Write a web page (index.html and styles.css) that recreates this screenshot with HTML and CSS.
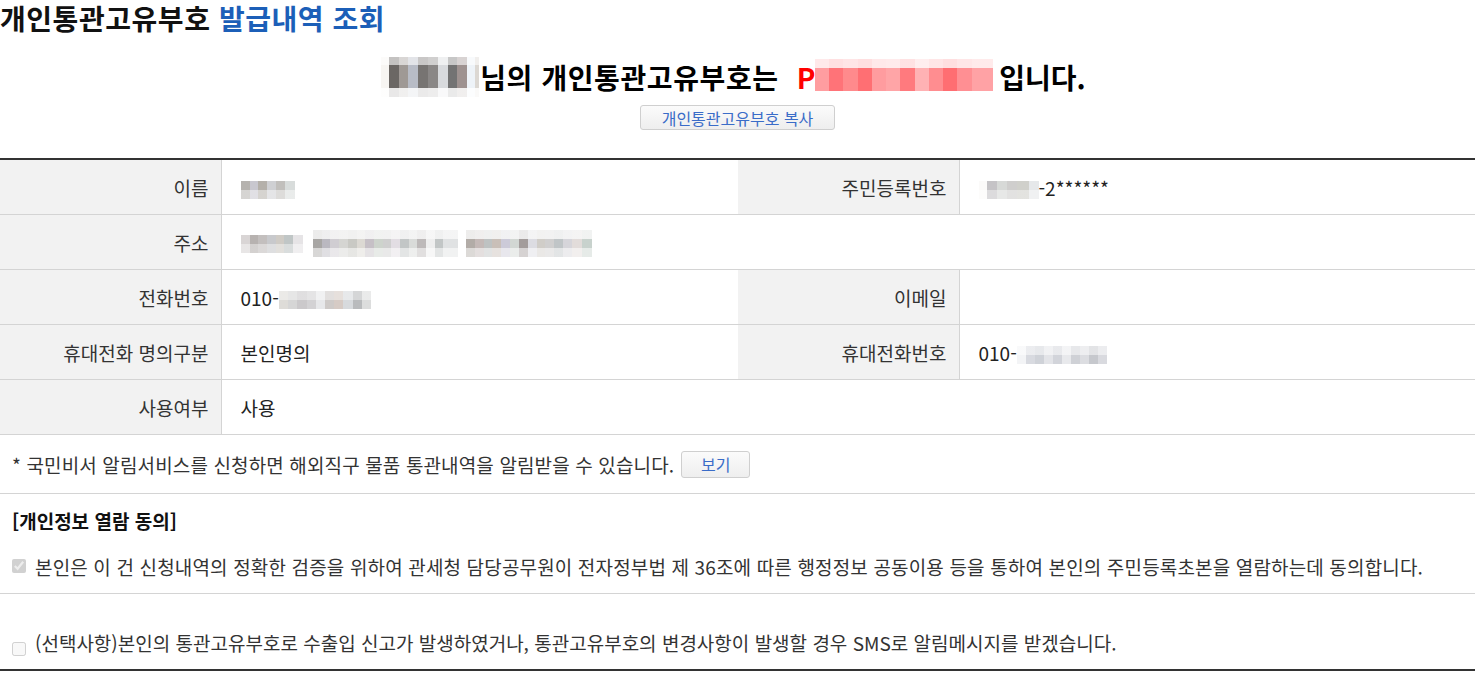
FILE: index.html
```html
<!DOCTYPE html>
<html lang="ko">
<head>
<meta charset="utf-8">
<title>개인통관고유부호 발급내역 조회</title>
<link rel="stylesheet" href="styles.css">
</head>
<body>
<h1 class="page-title">개인통관고유부호 <span class="accent">발급내역 조회</span></h1>

<section class="result">
  <p class="result-line"><span class="mosaic mosaic-name"></span><span class="who">님의 개인통관고유부호는</span><span class="code"><span class="code-p">P</span><span class="mosaic mosaic-code"></span></span><span class="tail">입니다.</span></p>
  <button class="btn btn-copy" type="button">개인통관고유부호 복사</button>
</section>

<table class="info">
  <colgroup>
    <col class="c-th1"><col class="c-td1"><col class="c-th2"><col>
  </colgroup>
  <tr>
    <th>이름</th>
    <td><span class="mosaic mosaic-s1"></span></td>
    <th>주민등록번호</th>
    <td><span class="mosaic mosaic-s2"></span>-2******</td>
  </tr>
  <tr>
    <th>주소</th>
    <td colspan="3"><span class="mosaic mosaic-a1"></span><span class="mosaic mosaic-a2"></span><span class="mosaic mosaic-a3"></span></td>
  </tr>
  <tr>
    <th>전화번호</th>
    <td>010-<span class="mosaic mosaic-p"></span></td>
    <th>이메일</th>
    <td></td>
  </tr>
  <tr>
    <th>휴대전화 명의구분</th>
    <td>본인명의</td>
    <th>휴대전화번호</th>
    <td>010-<span class="mosaic mosaic-p2"></span></td>
  </tr>
  <tr>
    <th>사용여부</th>
    <td colspan="3">사용</td>
  </tr>
</table>

<div class="notice">
  <span>* 국민비서 알림서비스를 신청하면 해외직구 물품 통관내역을 알림받을 수 있습니다.</span>
  <button class="btn btn-view" type="button">보기</button>
</div>

<section class="agree">
  <h2 class="agree-title">[개인정보 열람 동의]</h2>
  <label class="check-row"><input type="checkbox" checked disabled><span>본인은 이 건 신청내역의 정확한 검증을 위하여 관세청 담당공무원이 전자정부법 제 36조에 따른 행정정보 공동이용 등을 통하여 본인의 주민등록초본을 열람하는데 동의합니다.</span></label>
  <label class="check-row check-row-2"><input type="checkbox" disabled><span>(선택사항)본인의 통관고유부호로 수출입 신고가 발생하였거나, 통관고유부호의 변경사항이 발생할 경우 SMS로 알림메시지를 받겠습니다.</span></label>
</section>
</body>
</html>
```

FILE: styles.css
```css
html, body {
  margin: 0;
  padding: 0;
  background: #fff;
}
body {
  font-family: "Noto Sans CJK KR", "Noto Sans", "Liberation Sans", sans-serif;
  color: #333;
  width: 1475px;
}
.page-title {
  margin: 0;
  height: 38px;
  font-size: 28px;
  line-height: 36px;
  font-weight: 700;
  color: #111;
  letter-spacing: 0.55px;
}
.page-title .accent {
  color: #1c5fb8;
}
.result {
  display: flex;
  flex-direction: column;
  align-items: center;
  height: 120px;
}
.result-line {
  margin: 18px 0 0;
  height: 42px;
  font-size: 28px;
  line-height: 42px;
  font-weight: 700;
  color: #000;
  display: flex;
  align-items: center;
  letter-spacing: 0.6px;
  white-space: nowrap;
  padding-right: 8px;
}
.who {
  margin-left: 1px;
}
.tail {
  margin-left: 6px;
  letter-spacing: 0;
}
.mosaic {
  display: inline-block;
  vertical-align: middle;
  flex: none;
}
.mosaic-name {
  width: 98px;
  height: 40px;
  background:
    linear-gradient(180deg, rgba(255,255,255,0.6) 0 20%, rgba(255,255,255,0) 20% 78%, rgba(255,255,255,0.85) 78% 100%),
    linear-gradient(90deg, #f7f5f2 0 8%, #6b6764 8% 18%, #9f9995 18% 28%, #b8bcc6 28% 38%, #777472 38% 48%, #8a8786 48% 58%, #d8dadd 58% 68%, #737373 68% 78%, #9e9290 78% 88%, #eef3f8 88% 96%, #dcd8d3 96% 100%);
}
.code {
  display: inline-flex;
  align-items: center;
  margin-left: 18px;
}
.code-p {
  color: #f00;
  letter-spacing: 0;
}
.mosaic-code {
  width: 178px;
  height: 32px;
  margin-top: -4px;
  background:
    linear-gradient(180deg, rgba(255,255,255,0.78) 0 28%, rgba(255,255,255,0) 28% 100%),
    linear-gradient(90deg, #ff9da0 0 8%, #ff7378 8% 16%, #ff8a8c 16% 24%, #ff6f73 24% 32%, #ff9c9f 32% 40%, #ffa5a7 40% 48%, #ff7a7e 48% 56%, #ffb2b4 56% 64%, #ff8d90 64% 72%, #ff6e72 72% 80%, #ff8f93 80% 88%, #ffa2a5 88% 100%);
}
.btn {
  font-family: "Noto Sans CJK KR", "Noto Sans", sans-serif;
  background: linear-gradient(#fbfbfb, #eeeeee);
  border: 1px solid #cfcfcf;
  border-radius: 3px;
  color: #3a6cc8;
  cursor: pointer;
  padding: 0;
}
.btn-copy {
  margin-top: 7px;
  width: 195px;
  height: 25px;
  font-size: 16px;
  line-height: 22px;
}
.info {
  width: 1475px;
  border-collapse: collapse;
  border-top: 2px solid #333;
  font-size: 19px;
  table-layout: fixed;
}
.c-th1 { width: 221px; }
.c-td1 { width: 517px; }
.c-th2 { width: 221px; }
.info th,
.info td {
  height: 54px;
  border-bottom: 1px solid #d4d4d4;
  padding: 0;
  font-weight: 400;
  color: #333;
}
.info th {
  background: #f2f2f2;
  text-align: right;
  padding-right: 12px;
  border-right: 1px solid #d4d4d4;
}
.info td {
  text-align: left;
  padding-left: 19px;
  color: #222;
}
.mosaic-s1 {
  width: 54px;
  height: 18px;
  background:
    linear-gradient(180deg, rgba(255,255,255,0) 0 50%, rgba(255,255,255,0.45) 50% 100%),
    linear-gradient(90deg, #b5b2ae 0 16%, #c8c7cf 16% 32%, #b4b0aa 32% 48%, #cfd0d3 48% 64%, #c1bfbc 64% 82%, #d8dcdb 82% 100%);
}
.mosaic-s2 {
  width: 60px;
  height: 18px;
  background:
    linear-gradient(180deg, rgba(255,255,255,0) 0 50%, rgba(255,255,255,0.4) 50% 100%),
    linear-gradient(90deg, #fbfaf9 0 14%, #c5c3c6 14% 30%, #d7d9d7 30% 46%, #cfcecd 46% 64%, #d0d0cb 64% 84%, #e6e8ea 84% 100%);
}
.mosaic-a1 {
  width: 62px;
  height: 18px;
  margin-right: 10px;
  background:
    linear-gradient(180deg, rgba(255,255,255,0) 0 50%, rgba(255,255,255,0.4) 50% 100%),
    linear-gradient(90deg, #d9d5d5 0 14%, #b7b2b0 14% 28%, #c3bfbe 28% 42%, #c8c9cc 42% 56%, #cfcbc5 56% 70%, #c0c6c6 70% 84%, #e6e4e6 84% 100%);
}
.mosaic-a2 {
  width: 145px;
  height: 27px;
  margin-right: 8px;
  background:
    linear-gradient(180deg, rgba(248,248,248,0.85) 0 33%, rgba(255,255,255,0) 33% 66%, rgba(255,255,255,0.55) 66% 100%),
    linear-gradient(90deg, #a8a6a4 0 6%, #bab8c0 6% 12%, #d0cdd2 12% 18%, #d5d5d2 18% 24%, #c9c9c4 24% 30%, #dcd9d3 30% 36%, #c6c0c6 36% 42%, #cdd3cc 42% 48%, #cfcfcf 48% 54%, #e2dde3 54% 60%, #c2c6c6 60% 66%, #d9dbd9 66% 72%, #bdb9b9 72% 78%, #eeeeee 78% 84%, #c2c6c6 84% 90%, #e0e2e3 90% 100%);
}
.mosaic-a3 {
  width: 126px;
  height: 27px;
  background:
    linear-gradient(180deg, rgba(248,248,248,0.85) 0 33%, rgba(255,255,255,0) 33% 66%, rgba(255,255,255,0.55) 66% 100%),
    linear-gradient(90deg, #b2aca7 0 7%, #c4b9b7 7% 14%, #bec2c2 14% 21%, #c9bfb8 21% 28%, #cccad8 28% 35%, #d2d7d3 35% 42%, #a39c9b 42% 49%, #dcdce2 49% 56%, #d0cdc8 56% 63%, #d0cfcf 63% 70%, #c0c5c7 70% 77%, #d6d5da 77% 84%, #e2dcda 84% 92%, #c8d2cd 92% 100%);
}
.mosaic-p {
  width: 92px;
  height: 18px;
  background:
    linear-gradient(180deg, rgba(255,255,255,0.4) 0 50%, rgba(255,255,255,0) 50% 100%),
    linear-gradient(90deg, #dedcd8 0 10%, #d6d6d6 10% 20%, #cbc9cb 20% 30%, #d3d2d4 30% 40%, #e7e8ea 40% 50%, #cecac8 50% 60%, #d6cbc5 60% 70%, #d7dadd 70% 80%, #b9bbbd 80% 90%, #dcdddd 90% 100%);
}
.mosaic-p2 {
  width: 90px;
  height: 18px;
  background:
    linear-gradient(180deg, rgba(255,255,255,0.5) 0 50%, rgba(255,255,255,0) 50% 100%),
    linear-gradient(90deg, #f3f4f6 0 10%, #d8dae0 10% 20%, #cfd2d8 20% 30%, #e3e4e8 30% 40%, #d2d4da 40% 50%, #e8e9ec 50% 60%, #cfd1d6 60% 70%, #dcdde1 70% 80%, #c6c8cd 80% 90%, #d9dadf 90% 100%);
}
.notice {
  display: flex;
  align-items: center;
  gap: 7px;
  height: 58px;
  padding-left: 12px;
  font-size: 19px;
  letter-spacing: 0.13px;
  color: #333;
  border-bottom: 1px solid #d4d4d4;
}
.btn-view {
  width: 69px;
  height: 27px;
  font-size: 16px;
  line-height: 24px;
  letter-spacing: 0;
}
.agree {
  border-bottom: 2px solid #333;
}
.agree-title {
  margin: 0;
  padding: 14px 0 0 12px;
  height: 37px;
  font-size: 19px;
  line-height: 26px;
  font-weight: 700;
  color: #111;
}
.check-row {
  display: flex;
  align-items: center;
  padding-left: 12px;
  padding-bottom: 6px;
  box-sizing: border-box;
  font-size: 19px;
  letter-spacing: 0.15px;
  color: #333;
  height: 49px;
  border-bottom: 1px solid #d4d4d4;
}
.check-row input {
  margin: 0 9px 0 0;
  width: 14px;
  height: 14px;
  flex: none;
}
.check-row-2 {
  border-bottom: 0;
  align-items: flex-end;
  height: 75px;
  padding-bottom: 13px;
  letter-spacing: 0;
}
```
